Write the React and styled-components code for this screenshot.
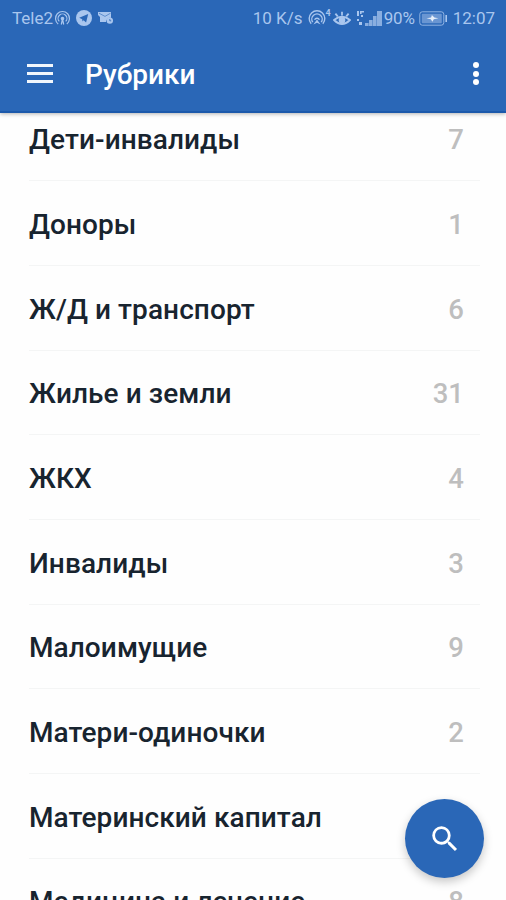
import React from "react";
import styled, { createGlobalStyle } from "styled-components";

const rubrics = [
  { title: "Дети-инвалиды", count: 7 },
  { title: "Доноры", count: 1 },
  { title: "Ж/Д и транспорт", count: 6 },
  { title: "Жилье и земли", count: 31 },
  { title: "ЖКХ", count: 4 },
  { title: "Инвалиды", count: 3 },
  { title: "Малоимущие", count: 9 },
  { title: "Матери-одиночки", count: 2 },
  { title: "Материнский капитал" },
  { title: "Медицина и лечение", count: 8 },
];

function HotspotIcon() {
  return (
    <svg width="17" height="16" viewBox="0 0 17 16" fill="none" stroke="currentColor" strokeWidth="1.2">
      <path d="M4.2 14A7 7 0 1 1 12.8 14" />
      <path d="M5.3 11.4A4.4 4.4 0 1 1 11.7 11.4" />
      <circle cx="8.5" cy="8.6" r="1.2" fill="currentColor" />
      <path d="M8.5 9l-1.2 5.5M8.5 9l1.2 5.5" />
    </svg>
  );
}

function TelegramIcon() {
  return (
    <svg width="16" height="16" viewBox="0 0 16 16">
      <circle cx="8" cy="8" r="8" fill="currentColor" />
      <path d="M3.2 7.8L12.2 4 10.1 12.4 7.6 10.3 6.5 11.5 6.2 9.2z" fill="#2a67b7" />
    </svg>
  );
}

function MailIcon() {
  return (
    <svg width="17" height="14" viewBox="0 0 17 14">
      <path d="M1 1h13v6a4 4 0 0 0-5 4H3V6L1 4z" fill="currentColor" />
      <path d="M2 2.2l6 3.2 5.5-3.2" fill="none" stroke="#2a67b7" strokeWidth="0.6" />
      <circle cx="12.8" cy="9.6" r="3.2" fill="currentColor" />
      <path d="M12.8 8v1.8h1.4" fill="none" stroke="#2a67b7" strokeWidth="0.8" />
    </svg>
  );
}

function CastIcon() {
  return (
    <svg width="18" height="16" viewBox="0 0 18 16" fill="none" stroke="currentColor" strokeWidth="1.4">
      <path d="M3.2 13.8A7.8 7.8 0 1 1 14.8 13.8" />
      <path d="M4.8 12.2A5.2 5.2 0 1 1 13.2 12.2" />
      <path d="M6.6 9.8A2.6 2.6 0 0 1 11.4 9.8" />
      <path d="M9 9.5l3.6 5L9 12.8l-3.6 1.7z" fill="currentColor" stroke="none" />
    </svg>
  );
}

function EyeIcon() {
  return (
    <svg width="18" height="15" viewBox="0 0 18 15" fill="none" stroke="currentColor" strokeWidth="1.8">
      <path d="M1 9Q9 2.5 17 9Q9 17 1 9z" />
      <circle cx="9" cy="9.2" r="2.4" fill="currentColor" />
      <path d="M9 4.5V0.8M4.7 5.4L2.4 2.6M13.3 5.4l2.3-2.8" />
    </svg>
  );
}

function SignalIcon() {
  return (
    <svg width="27" height="17" viewBox="0 0 27 17" fill="currentColor">
      <path d="M1 1h2v5H1zM4 1h4v1.5H5.6V4H4zM1 9h2v2H1zM3 12h3v3H3zM5 5h2v2H5z" />
      <path d="M9 13h3.6v3H9zM13 10h3.6v6H13zM17 6h3.6v10H17z" opacity="0.75" />
      <path d="M21 1h5v15h-5z" opacity="0.75" />
    </svg>
  );
}

function BatteryIcon() {
  return (
    <svg width="29" height="15" viewBox="0 0 29 15">
      <rect x="0.8" y="0.8" width="24" height="13.4" rx="2.5" fill="none" stroke="currentColor" strokeWidth="1" opacity="0.8" />
      <rect x="2.8" y="2.8" width="20" height="9.4" rx="1" fill="currentColor" opacity="0.5" />
      <path d="M7.5 7.2l4.6-.8.8-2.5 2.5 2.5 4 .8-4.6 1-1.4 2.6-1.6-2.5z" fill="#e6effa" />
      <path d="M27.2 4v7" stroke="currentColor" strokeWidth="1.6" />
    </svg>
  );
}

export default function App() {
  return (
    <>
      <GlobalStyle />
      <Screen>
        <Header>
          <StatusBar>
            <StatusGroup>
              <StatusText>Tele2</StatusText>
              <StatusIcon $left={1}><HotspotIcon /></StatusIcon>
              <StatusIcon $left={5}><TelegramIcon /></StatusIcon>
              <StatusIcon $left={5}><MailIcon /></StatusIcon>
            </StatusGroup>
            <StatusGroup>
              <StatusText>10 K/s</StatusText>
              <StatusIcon $left={5}><CastIcon /></StatusIcon>
              <Sup>4</Sup>
              <StatusIcon $left={2}><EyeIcon /></StatusIcon>
              <StatusIcon $left={5}><SignalIcon /></StatusIcon>
              <StatusText $spacing="-0.2px" $left={1}>90%</StatusText>
              <StatusIcon $left={4}><BatteryIcon /></StatusIcon>
              <StatusText $left={5}>12:07</StatusText>
            </StatusGroup>
          </StatusBar>
          <Toolbar>
            <MenuButton aria-label="Меню">
              <span />
              <span />
              <span />
            </MenuButton>
            <Title>Рубрики</Title>
            <MoreButton aria-label="Ещё">
              <span />
              <span />
              <span />
            </MoreButton>
          </Toolbar>
        </Header>
        <List>
          {rubrics.map((rubric) => (
            <Row key={rubric.title}>
              <RowTitle>{rubric.title}</RowTitle>
              {rubric.count && <Count>{rubric.count}</Count>}
            </Row>
          ))}
        </List>
        <SearchButton aria-label="Поиск">
          <svg width="34" height="34" viewBox="0 0 24 24" fill="#fff">
            <path d="M15.5 14h-.79l-.28-.27A6.47 6.47 0 0 0 16 9.5 6.5 6.5 0 1 0 9.5 16c1.61 0 3.09-.59 4.23-1.57l.27.28v.79l5 4.99L20.49 19l-4.99-5zm-6 0C7.01 14 5 11.99 5 9.5S7.01 5 9.5 5 14 7.01 14 9.5 11.99 14 9.5 14z" />
          </svg>
        </SearchButton>
      </Screen>
    </>
  );
}

const GlobalStyle = createGlobalStyle`
  * {
    box-sizing: border-box;
  }
  body {
    margin: 0;
    overflow: hidden;
    font-family: Roboto, "Noto Sans", sans-serif;
  }
`;

const Screen = styled.div`
  position: relative;
  display: flex;
  flex-direction: column;
  width: 506px;
  height: 900px;
  overflow: hidden;
  background-color: #fefefe;
`;

const Header = styled.header`
  position: relative;
  z-index: 1;
  flex: none;
  height: 113px;
  background-color: #2a67b7;
  border-bottom: 2px solid #1c59ab;
  box-shadow: 0 1px 4px rgba(0, 0, 0, 0.3);
`;

const StatusBar = styled.div`
  display: flex;
  justify-content: space-between;
  align-items: center;
  height: 36px;
  padding: 0 11px 0 12px;
  color: #a9c6ee;
`;

const StatusGroup = styled.div`
  display: flex;
  align-items: center;
`;

const StatusText = styled.span`
  margin-left: ${({ $left }) => $left || 0}px;
  font-size: 17px;
  line-height: 20px;
  letter-spacing: ${({ $spacing }) => $spacing || "0"};
`;

const StatusIcon = styled.span`
  display: flex;
  margin-left: ${({ $left }) => $left}px;
`;

const Sup = styled.span`
  align-self: flex-start;
  margin-top: 1px;
  font-size: 9px;
  font-weight: 700;
  line-height: 9px;
`;

const Toolbar = styled.div`
  display: flex;
  align-items: center;
  height: 76px;
  padding: 0 27px;
`;

const MenuButton = styled.button`
  display: flex;
  flex-direction: column;
  gap: 5px;
  margin-top: -1px;
  padding: 0;
  border: none;
  background: none;
  span {
    width: 26px;
    height: 3px;
    background-color: #f1f6fc;
  }
`;

const Title = styled.h1`
  flex: 1;
  margin: 2px 0 0 32px;
  font-size: 28px;
  font-weight: 500;
  line-height: 32px;
  color: #fff;
`;

const MoreButton = styled.button`
  display: flex;
  flex-direction: column;
  gap: 2.5px;
  margin-top: -1px;
  padding: 0;
  border: none;
  background: none;
  span {
    width: 6px;
    height: 6px;
    border-radius: 50%;
    background-color: #fff;
  }
`;

const List = styled.main`
  margin-top: -16.4px;
  padding: 0 26px 0 29px;
`;

const Row = styled.div`
  display: flex;
  align-items: center;
  justify-content: space-between;
  height: 84.68px;
  padding: 2.6px 16px 0 0;
  border-bottom: 1px solid #f4f5f5;
`;

const RowTitle = styled.span`
  font-size: 28px;
  font-weight: 500;
  letter-spacing: 0.08px;
  color: #18242f;
`;

const Count = styled.span`
  font-size: 27.5px;
  font-weight: 500;
  color: #bebebe;
`;

const SearchButton = styled.button`
  position: absolute;
  right: 22px;
  bottom: 22px;
  display: flex;
  align-items: center;
  justify-content: center;
  width: 79px;
  height: 79px;
  padding: 0;
  border: none;
  border-radius: 50%;
  background-color: #2a67b7;
  box-shadow: 0 4px 10px rgba(0, 0, 0, 0.22);
`;
